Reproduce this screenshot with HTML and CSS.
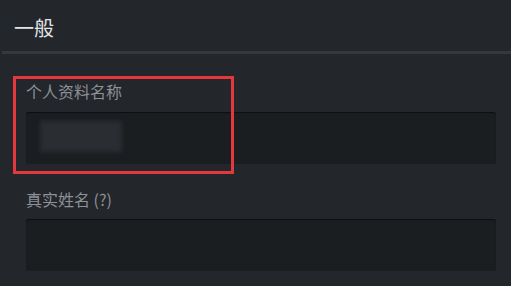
FILE: index.html
```html
<!DOCTYPE html>
<html lang="zh-CN">
<head>
    <meta charset="UTF-8">
    <meta name="viewport" content="width=device-width, initial-scale=1.0">
    <title>一般</title>
    <link rel="stylesheet" href="styles.css">
</head>
<body>
    <div class="page">
        <div class="header">
            <h1>一般</h1>
        </div>
        <div class="fields">
            <div class="field">
                <label>个人资料名称</label>
                <div class="input"><span class="blur"></span></div>
            </div>
            <div class="field">
                <label>真实姓名 (?)</label>
                <div class="input"></div>
            </div>
        </div>
        <!-- 标注框 -->
        <div class="mark"></div>
    </div>
</body>
</html>
```
FILE: styles.css
```css
*{
    margin: 0;
    padding: 0;
    box-sizing: border-box;
}
html,body{
    height: 100%;
}
body{
    background-color: #23262a;
    font-family: "Noto Sans CJK SC", "Noto Sans", sans-serif;
    overflow: hidden;
}
.page{
    position: relative;
    height: 100%;
}
.header{
    height: 54px;
    padding: 16px 0 0 12px;
    border-bottom: 3px solid #35383d;
    margin-left: 2px;
}
.header h1{
    font-size: 20px;
    line-height: 24px;
    font-weight: normal;
    color: #e1e4e7;
}
.fields{
    padding: 27px 15px 0 26px;
}
.field{
    margin-bottom: 25px;
}
.field label{
    display: block;
    font-size: 16px;
    line-height: 20px;
    color: #8c9197;
    margin-bottom: 11px;
}
.field + .field label{
    margin-bottom: 10px;
}
.input{
    height: 52px;
    background-color: #1b1e21;
    border-radius: 3px;
    box-shadow: inset 0 1px 1px #0e1012;
    padding: 9px 14px;
}
.blur{
    display: block;
    width: 82px;
    height: 31px;
    background-color: #2a2d31;
    filter: blur(2px);
}
.mark{
    position: absolute;
    left: 13px;
    top: 76px;
    width: 221px;
    height: 98px;
    border: 3px solid #e4383d;
}
```
